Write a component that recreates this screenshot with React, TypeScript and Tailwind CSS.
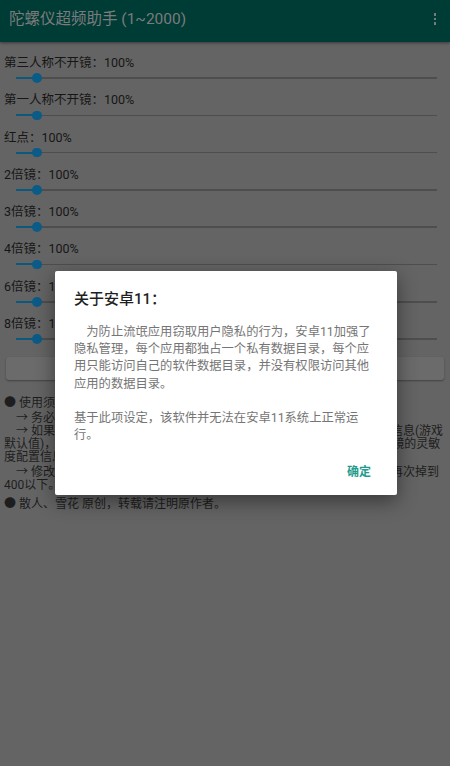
import React from 'react';

const sliders = ['第三人称不开镜', '第一人称不开镜', '红点', '2倍镜', '3倍镜', '4倍镜', '6倍镜', '8倍镜'];

const Slider: React.FC = () => (
  <div className="ml-[16px] w-[421px] h-[14px] flex items-center">
    <div className="w-[21px] h-[2px] bg-[#0d587f]" />
    <div className="w-[9.5px] h-[9.5px] -mx-[4.75px] rounded-full bg-[#0b5b87] relative z-[1]" />
    <div className="flex-1 h-[1.5px] bg-[#4e4e4e]" />
  </div>
);

export default function App() {
  return (
    <div className="relative w-[450px] h-[766px] overflow-hidden bg-[#646464] font-[Roboto,'Noto_Sans_CJK_SC',sans-serif]">
      <header className="relative z-10 h-[42px] bg-[#003c36] flex items-center justify-between pl-[9px] pr-[14px] shadow-[0_1px_3px_rgba(0,0,0,0.45)]">
        <h1 className="text-[15.5px] leading-[20px] text-[#7b7b7b] pb-[5px]">陀螺仪超频助手 (1~2000)</h1>
        <div className="flex flex-col gap-[2px] pb-[4px]">
          <span className="w-[2.5px] h-[2.5px] bg-[#7a7a7a]" />
          <span className="w-[2.5px] h-[2.5px] bg-[#7a7a7a]" />
          <span className="w-[2.5px] h-[2.5px] bg-[#7a7a7a]" />
        </div>
      </header>

      <main className="pt-[13px]">
        {sliders.map((name) => (
          <div key={name} className="h-[37.3px]">
            <div className="pl-[4px] text-[12.5px] leading-[16px] text-[#161616]">{name}：100%</div>
            <Slider />
          </div>
        ))}

        <div className="mx-[6px] mt-[3.5px] h-[23px] rounded-[3px] bg-[#6b6b6b] shadow-[0_1px_2px_rgba(0,0,0,0.35)] flex items-center justify-center text-[12.5px] text-[#1a1a1a]">
          保存设置
        </div>

        <div className="pl-[4px] pr-[6px] mt-[17px] text-[12px] leading-[13px] text-[#1e1e1e]">
          <p>● 使用须知：</p>
          <p className="mt-[2px]">　→ 务必先在游戏中把各项灵敏度调整到合适的数值。</p>
          <p>　→ 如果某项倍镜的灵敏度修改后无效，请先进入游戏中重置灵敏度配置信息(游戏默认值)，重置完成后请重启游戏，然后再使用本软件重新修改一次各个倍镜的灵敏度配置信息。</p>
          <p className="mt-[2px]">　→ 修改成功后，若游戏更新或重新安装，灵敏度可能被重置，导致数值再次掉到400以下。</p>
          <p className="mt-[6px]">● 散人、雪花 原创，转载请注明原作者。</p>
        </div>
      </main>

      <div className="absolute inset-0 z-20 flex items-center justify-center">
        <div className="ml-[2px] w-[342px] bg-white rounded-[2px] shadow-[0_6px_20px_rgba(0,0,0,0.45)] pt-[18px] pb-[4.6px]">
          <h2 className="px-[19px] text-[15px] leading-[20px] font-medium text-[#1f1f1f]">关于安卓11：</h2>
          <p className="mt-[15px] px-[19px] text-[12.3px] leading-[17.2px] text-[#757575] whitespace-pre-wrap">
            {'　为防止流氓应用窃取用户隐私的行为，安卓11加强了隐私管理，每个应用都独占一个私有数据目录，每个应用只能访问自己的软件数据目录，并没有权限访问其他应用的数据目录。\n\n基于此项设定，该软件并无法在安卓11系统上正常运行。'}
          </p>
          <div className="mt-[10px] flex justify-end pr-[16px]">
            <button className="h-[36px] px-[10px] text-[12px] font-bold text-[#1f9c8d]">确定</button>
          </div>
        </div>
      </div>
    </div>
  );
}
